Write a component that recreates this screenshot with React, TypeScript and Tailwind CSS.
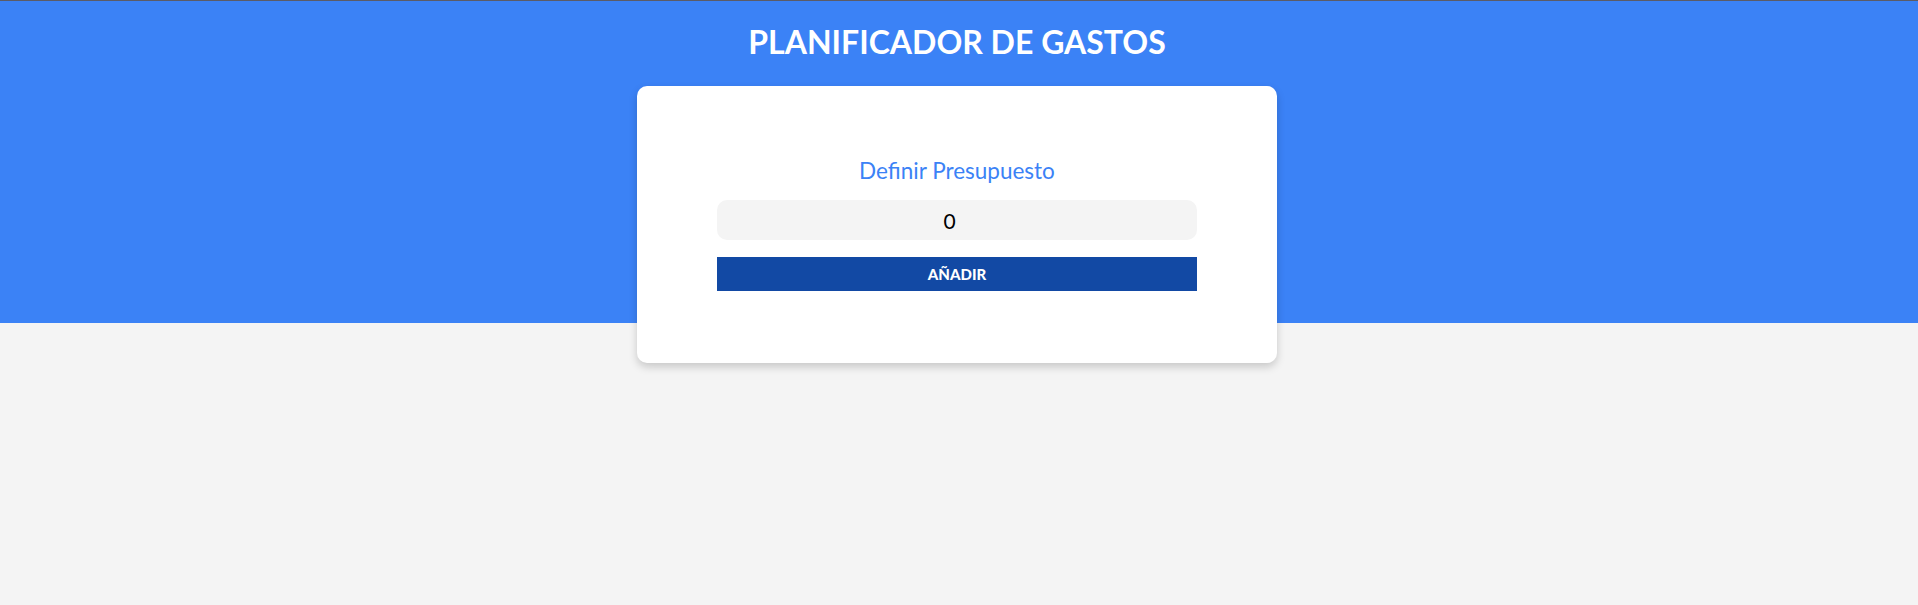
export default function App() {
  return (
    <div className="min-h-[605px] w-full border-t border-[#5b5b66] bg-[linear-gradient(to_bottom,#3b82f6_322px,#f4f4f4_322px)] font-['Lato',sans-serif]">
      <div className="pr-[4px]">
        {/* Header */}
        <header className="pt-[21px]">
          <h1 className="text-center text-[32px] leading-[40px] font-bold text-white">
            PLANIFICADOR DE GASTOS
          </h1>
        </header>

        {/* Card */}
        <div className="mx-auto mt-[24px] w-[640px] rounded-[10px] bg-white px-[80px] pt-[71px] pb-[72px] shadow-[0_4px_8px_rgba(0,0,0,0.18)]">
          <form className="flex flex-col" onSubmit={(e) => e.preventDefault()}>
            <label className="text-center text-[22.5px] leading-[28px] text-[#3b82f6]">
              Definir Presupuesto
            </label>
            <input
              type="number"
              defaultValue={0}
              className="mt-[15px] h-[40px] w-full rounded-[10px] bg-[#f4f4f4] text-center text-[21px] text-black outline-none"
            />
            <button
              type="submit"
              className="mt-[17px] h-[34px] w-full bg-[#1249a4] text-[15px] font-black uppercase text-white"
            >
              Añadir
            </button>
          </form>
        </div>
      </div>
    </div>
  );
}
